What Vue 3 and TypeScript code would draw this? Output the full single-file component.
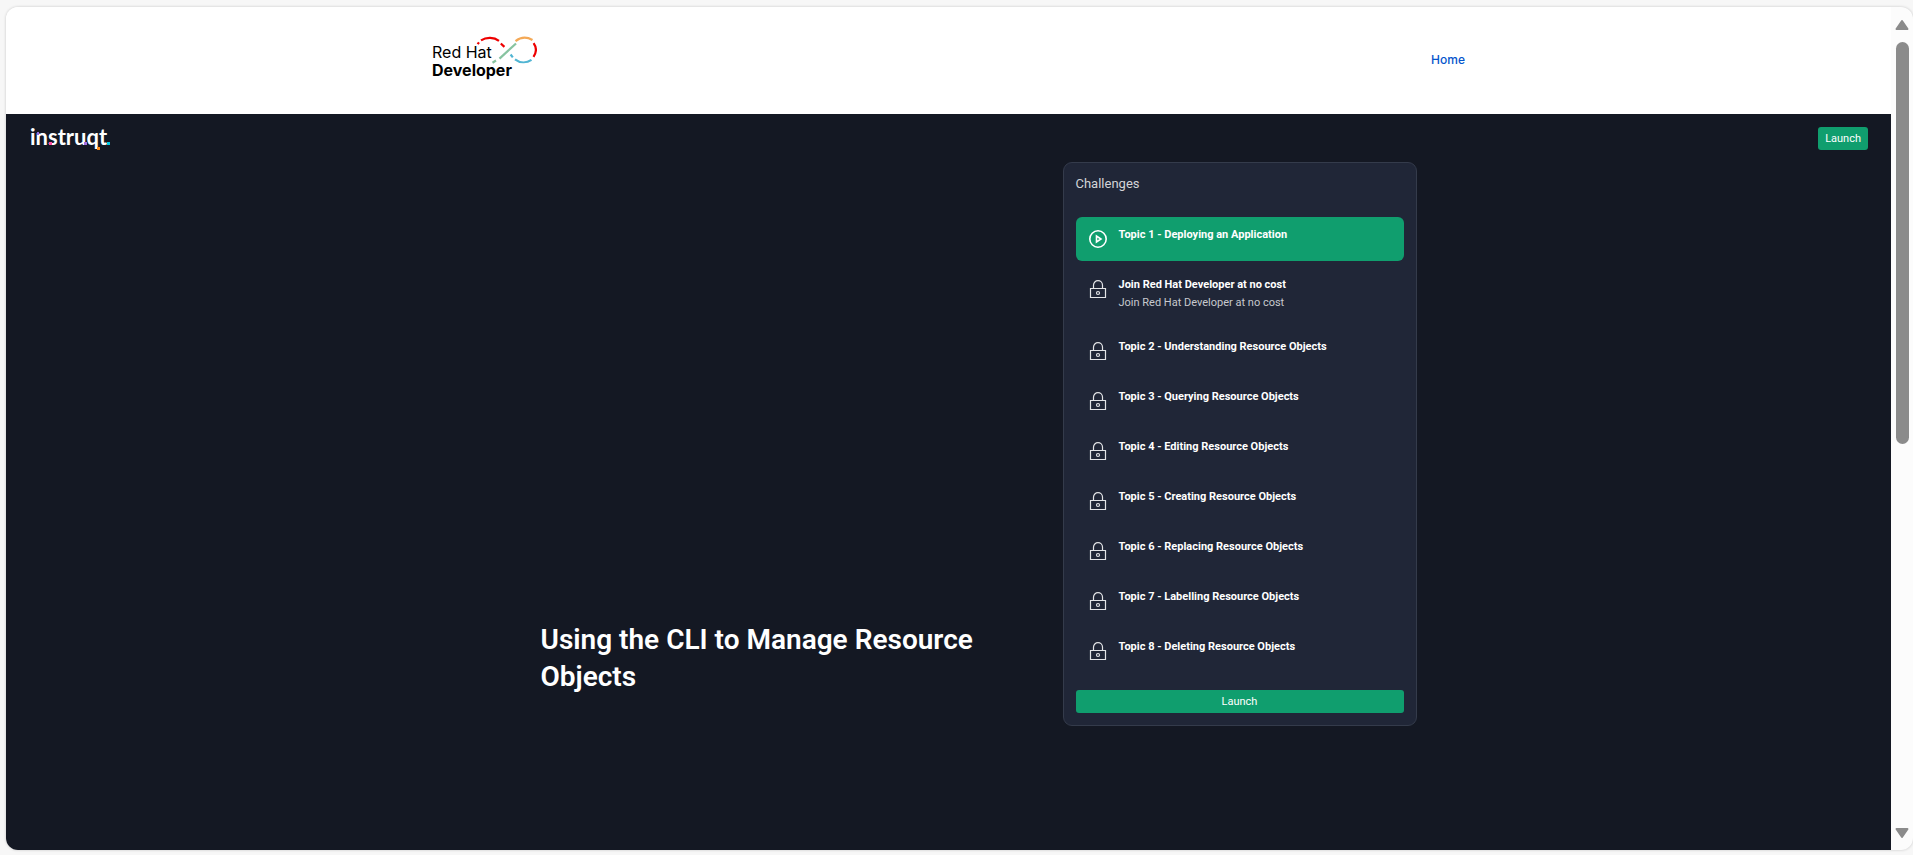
<script setup lang="ts">
interface Challenge {
  title: string
  teaser?: string
  active?: boolean
}

const challenges: Challenge[] = [
  { title: 'Topic 1 - Deploying an Application', active: true },
  { title: 'Join Red Hat Developer at no cost', teaser: 'Join Red Hat Developer at no cost' },
  { title: 'Topic 2 - Understanding Resource Objects' },
  { title: 'Topic 3 - Querying Resource Objects' },
  { title: 'Topic 4 - Editing Resource Objects' },
  { title: 'Topic 5 - Creating Resource Objects' },
  { title: 'Topic 6 - Replacing Resource Objects' },
  { title: 'Topic 7 - Labelling Resource Objects' },
  { title: 'Topic 8 - Deleting Resource Objects' },
]
</script>

<template>
  <div class="window">
    <div class="page">
      <header class="site-header">
        <div class="site-inner">
          <a href="#" aria-label="Red Hat Developer">
            <svg width="110" height="52" viewBox="0 0 110 52">
              <g fill="none" stroke-width="2.2">
                <path d="M50.600 12.200l1.400-1.900" stroke="#e00" />
                <path d="M54 8.400C59.500 4.800 67 5.100 72 8.800" stroke="#e00" />
                <path d="M73.800 11.500l3.600 3.400" stroke="#e00" />
                <path d="M72.500 26.600L89 11.500" stroke="#87c3a0" />
                <path d="M65.500 30.700l3.500-2.200" stroke="#87c3a0" />
                <path d="M88.500 9.200C93.500 5.200 100 4.900 105.500 8" stroke="#f4a957" />
                <path d="M83.600 22.500l2.200 2.900" stroke="#51b5d3" />
                <path d="M88 27.300c5 3.800 11.500 3.900 16.500.6" stroke="#51b5d3" />
                <path d="M106.600 11.200c3 4.300 2.900 9.300-.1 13.600" stroke="#e00" />
              </g>
              <text x="5" y="26" class="brand-top">Red Hat</text>
              <text x="5" y="44" class="brand-bottom">Developer</text>
            </svg>
          </a>
          <nav><a class="home" href="#">Home</a></nav>
        </div>
      </header>

      <main class="track">
        <div class="topbar">
          <a href="#" aria-label="instruqt">
            <svg width="84" height="34" viewBox="0 0 84 34">
              <text x="0" y="24" class="wordmark">instruqt</text>
              <path d="M7 11h2v3h-2z" fill="#8f6fe0" />
              <path d="M19 21h3v3h-3z" fill="#ff4fa3" />
              <path d="M54 21h3v3h-3z" fill="#a56ee0" />
              <path d="M67 26h3v3h-3z" fill="#ff8c1a" />
              <path d="M77 21h3v3h-3z" fill="#00c8e6" />
            </svg>
          </a>
          <button class="launch" type="button">Launch</button>
        </div>

        <div class="hero">
          <h1>Using the CLI to Manage Resource Objects</h1>
          <section class="card">
            <h2>Challenges</h2>
            <ul>
              <li v-for="c in challenges" :key="c.title" :class="{ active: c.active }">
                <svg v-if="c.active" class="icon" viewBox="0 0 18 18">
                  <circle cx="9" cy="9" r="8.200" />
                  <path d="M7.500 6v6l4.500-3z" />
                </svg>
                <svg v-else class="icon" viewBox="0 0 18 18">
                  <path d="M1.500 8.500h15v9h-15zM4.500 8.500V5.200a4.500 4.500 0 0 1 9 0v3.300" />
                  <circle cx="9" cy="13" r="1.500" />
                </svg>
                <div>
                  <h3>{{ c.title }}</h3>
                  <p v-if="c.teaser">{{ c.teaser }}</p>
                </div>
              </li>
            </ul>
            <button class="launch wide" type="button">Launch</button>
          </section>
        </div>
      </main>
    </div>

    <div class="scrollbar" aria-hidden="true">
      <svg width="16" height="12" viewBox="0 0 16 12"><path d="M8 2l5.500 8h-11z" /></svg>
      <div class="rail"><div class="thumb"></div></div>
      <svg width="16" height="12" viewBox="0 0 16 12"><path d="M8 10l5.500-8h-11z" /></svg>
    </div>
  </div>
</template>

<style>
body {
  background: #f7f7f7;
}
</style>

<style scoped>
* {
  box-sizing: border-box;
}
h1, h2, h3, p, ul {
  margin: 0;
  padding: 0;
}
svg {
  display: block;
}
.window {
  display: flex;
  height: calc(100vh - 12px);
  margin: 7px 0 5px 6px;
  border-radius: 12px;
  overflow: hidden;
  background: #fcfcfc;
  box-shadow: 0 0 3px rgba(0, 0, 0, 0.2);
  font-family: Roboto, "Liberation Sans", sans-serif;
}
.page {
  flex: 1;
  display: flex;
  flex-direction: column;
}
.site-header {
  height: 107px;
  background: #fff;
}
.site-inner {
  display: flex;
  justify-content: space-between;
  align-items: center;
  max-width: 1043px;
  height: 102px;
  margin: 0 auto;
  padding-right: 5px;
}
.brand-top, .brand-bottom {
  font-family: Inter, sans-serif;
  font-size: 16px;
}
.brand-bottom {
  font-weight: 700;
}
.home {
  font-family: Inter, sans-serif;
  font-size: 12px;
  line-height: 16px;
  font-weight: 500;
  color: #0555cc;
  text-decoration: none;
}
.track {
  flex: 1;
  background: #141823;
}
.topbar {
  display: flex;
  justify-content: space-between;
  align-items: center;
  height: 48px;
  padding: 0 23px 0 24px;
}
.wordmark {
  font-family: Lato, sans-serif;
  font-size: 22px;
  font-weight: 700;
  fill: #fff;
}
.launch {
  height: 23px;
  padding: 0 7px;
  border: 0;
  border-radius: 3px;
  background: #109e6e;
  color: #fff;
  font: 400 11px Roboto, sans-serif;
}
.hero {
  display: flex;
  align-items: flex-end;
  max-width: 936px;
  margin: 0 auto;
}
h1 {
  flex: 1;
  padding: 0 64px 31px 60px;
  color: #fff;
  font-size: 28px;
  font-weight: 600;
  line-height: 37px;
}
.card {
  width: 354px;
  padding: 12px;
  border: 1px solid #343b4b;
  border-radius: 9px;
  background: #202637;
  color: #fff;
}
h2 {
  margin-bottom: 24px;
  color: #d3d4d7;
  font-size: 13px;
  font-weight: 400;
  line-height: 18px;
}
ul {
  display: flex;
  flex-direction: column;
  gap: 6px;
  margin-bottom: 17px;
  list-style: none;
}
li {
  display: flex;
  gap: 12px;
  padding: 0 13px;
  border-radius: 6px;
}
li > div {
  padding: 9px 0 11px;
}
.active {
  background: #109e6e;
}
.icon {
  width: 18px;
  height: 18px;
  margin: 13px 0;
  fill: none;
  stroke: #e3e4e7;
  stroke-width: 1.2;
}
.active .icon {
  stroke: #fff;
  stroke-width: 1.6;
}
h3 {
  font-size: 11px;
  font-weight: 700;
  line-height: 18px;
}
p {
  color: #c7c9ce;
  font-size: 11px;
  line-height: 18px;
}
.wide {
  display: block;
  width: 100%;
}
.scrollbar {
  display: flex;
  flex-direction: column;
  align-items: center;
  width: 22px;
  padding: 12px 0 11px;
}
.scrollbar path {
  fill: #8b8b8b;
  stroke: #8b8b8b;
  stroke-width: 2;
  stroke-linejoin: round;
}
.rail {
  flex: 1;
  padding: 11px 0;
}
.thumb {
  width: 13px;
  height: 52%;
  border-radius: 7px;
  background: #8b8b8b;
}
</style>
